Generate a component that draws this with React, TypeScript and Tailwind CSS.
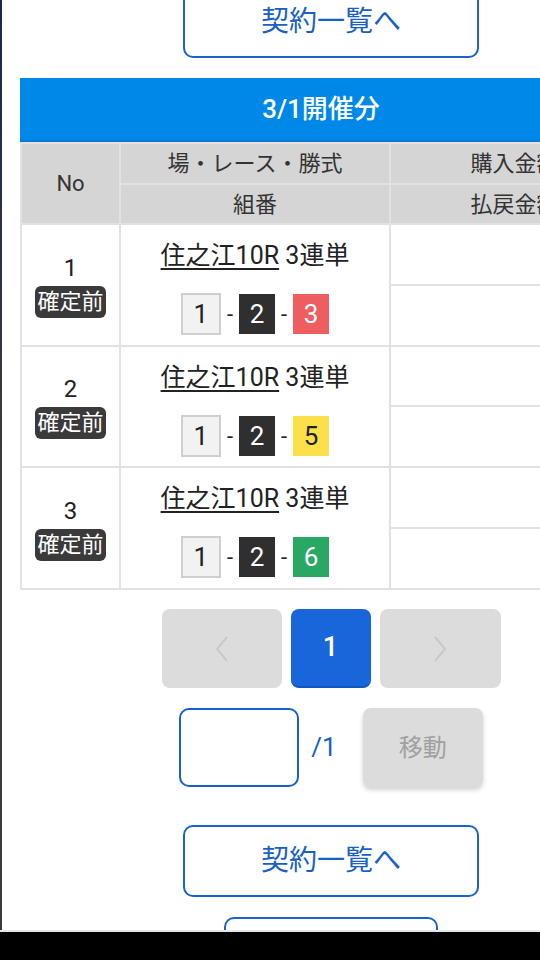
import React from "react";

const rows = [
  { no: 1, third: "3", cls: "bg-[#ee5d5f] text-white" },
  { no: 2, third: "5", cls: "bg-[#fbe04a] text-[#222]" },
  { no: 3, third: "6", cls: "bg-[#29a864] text-white" },
];

function ListButton({ className = "" }: { className?: string }) {
  return (
    <button
      className={
        "w-[296px] h-[72px] shrink-0 rounded-[10px] border-2 border-[#1a62cc] bg-white text-[28px] text-[#1a5fc4] flex items-center justify-center " +
        className
      }
    >
      契約一覧へ
    </button>
  );
}

export default function App() {
  return (
    <div className="w-[540px] h-[960px] flex flex-col bg-black overflow-hidden font-['Roboto','Noto_Sans_CJK_JP',sans-serif]">
      <div className="h-[930px] flex flex-row bg-white overflow-hidden shrink-0">
        <div className="w-[2px] shrink-0 bg-gradient-to-b from-[#1e2747] via-[#3a3a3a] to-[#3a3a3a]" />
        <div className="w-[658px] shrink-0 flex flex-col items-center">
          <ListButton className="mt-[-14px]" />

          <div className="self-start ml-[18px] mt-[20px] w-[620px] shrink-0">
            <div className="w-[602px] h-[64px] bg-[#0088e8] border-b-2 border-[#0b78d2] flex items-center justify-center text-white text-[26px] font-medium">
              3/1開催分
            </div>
            <div className="grid grid-cols-[97px_268px_247px] grid-rows-[39px_38px_59px_59px_58px_59px_59px_59px] gap-[2px] p-[2px] bg-[#e2e2e2] text-[#333]">
              <div className="row-span-2 bg-[#d5d5d5] flex items-center justify-center text-[22px]">No</div>
              <div className="bg-[#d5d5d5] flex items-center justify-center text-[22px]">場・レース・勝式</div>
              <div className="bg-[#d5d5d5] flex items-center justify-center text-[22px] whitespace-nowrap">購入金額</div>
              <div className="bg-[#d5d5d5] flex items-center justify-center text-[22px]">組番</div>
              <div className="bg-[#d5d5d5] flex items-center justify-center text-[22px] whitespace-nowrap">払戻金額</div>

              {rows.map((r) => (
                <React.Fragment key={r.no}>
                  <div className="row-span-2 bg-white flex flex-col items-center justify-center">
                    <div className="text-[24px] leading-[30px] text-[#222]">{r.no}</div>
                    <div className="mt-[3px] h-[32px] px-[2px] rounded-[6px] bg-[#3a3a3a] text-white text-[22px] leading-[32px]">
                      確定前
                    </div>
                  </div>
                  <div className="row-span-2 bg-white flex flex-col items-center pt-[15px]">
                    <div className="text-[25px] leading-[32px] text-[#222] whitespace-nowrap">
                      <span className="underline underline-offset-[4px] decoration-[2px]">住之江10R</span> 3連単
                    </div>
                    <div className="mt-[21px] flex items-center text-[26px]">
                      <div className="w-[40px] h-[42px] border-2 border-[#cfcfcf] bg-[#f2f2f2] text-[#222] flex items-center justify-center">
                        1
                      </div>
                      <span className="mx-[6px] text-[22px] text-[#222]">-</span>
                      <div className="w-[36px] h-[40px] bg-[#2f2f2f] text-white flex items-center justify-center">2</div>
                      <span className="mx-[6px] text-[22px] text-[#222]">-</span>
                      <div className={"w-[36px] h-[40px] flex items-center justify-center " + r.cls}>{r.third}</div>
                    </div>
                  </div>
                  <div className="bg-white" />
                  <div className="bg-white" />
                </React.Fragment>
              ))}
            </div>
          </div>

          <div className="mt-[19px] flex items-center gap-[9px]">
            <button className="w-[120px] h-[79px] rounded-[8px] bg-[#dcdcdc] flex items-center justify-center">
              <svg width="16" height="28" viewBox="0 0 16 28" fill="none">
                <path d="M13 2 L3 14 L13 26" stroke="#c9c9c9" strokeWidth="2" />
              </svg>
            </button>
            <button className="w-[80px] h-[79px] rounded-[8px] bg-[#1866d9] border-b-2 border-[#1256bf] text-white text-[27px] font-medium flex items-center justify-center">
              1
            </button>
            <button className="w-[121px] h-[79px] rounded-[8px] bg-[#dcdcdc] flex items-center justify-center">
              <svg width="16" height="28" viewBox="0 0 16 28" fill="none">
                <path d="M3 2 L13 14 L3 26" stroke="#c9c9c9" strokeWidth="2" />
              </svg>
            </button>
          </div>

          <div className="mt-[20px] flex items-center">
            <div className="w-[120px] h-[79px] rounded-[10px] border-2 border-[#1a5fc8] bg-white" />
            <span className="ml-[12px] text-[26px] text-[#1a5fc8]">/1</span>
            <button className="ml-[26px] w-[120px] h-[79px] rounded-[8px] bg-[#dcdcdc] text-[#a0a0a0] text-[24px] shadow-[0_3px_5px_rgba(0,0,0,0.18)] flex items-center justify-center">
              移動
            </button>
          </div>

          <ListButton className="mt-[38px]" />

          <div className="mt-[20px] w-[214px] h-[72px] shrink-0 rounded-[10px] border-2 border-[#1a62cc] bg-white" />
        </div>
      </div>
      <div className="h-[2px] bg-[#e6e6e6] shrink-0" />
      <div className="flex-1 bg-black" />
    </div>
  );
}
